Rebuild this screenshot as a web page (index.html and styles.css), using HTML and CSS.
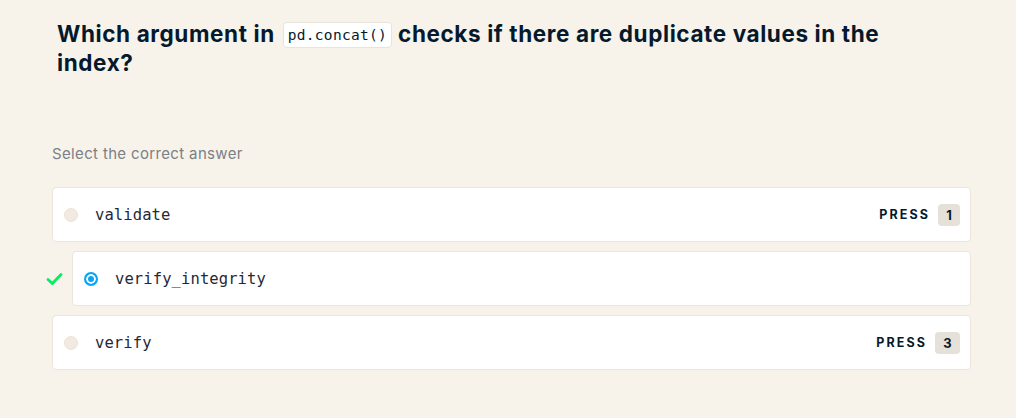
FILE: index.html
```html
<!DOCTYPE html>
<html lang="en">
<head>
<meta charset="utf-8">
<link rel="stylesheet" href="styles.css">
</head>
<body>
<main class="page">
  <h1 class="question">Which argument in<code class="inline-code">pd.concat()</code>checks if there are duplicate values in the index?</h1>
  <p class="hint">Select the correct answer</p>
  <div class="options">
    <div class="row">
      <div class="card">
        <span class="radio"></span>
        <span class="label">validate</span>
        <span class="press">PRESS <span class="key">1</span></span>
      </div>
    </div>
    <div class="row">
      <svg class="check" width="17" height="14" viewBox="0 0 17 14"><path d="M2 7.5 L6.3 11.5 L15 2.5" fill="none" stroke="#03ef62" stroke-width="2.8" stroke-linecap="round" stroke-linejoin="round"/></svg>
      <div class="card selected">
        <span class="radio on"></span>
        <span class="label">verify_integrity</span>
      </div>
    </div>
    <div class="row">
      <div class="card">
        <span class="radio"></span>
        <span class="label">verify</span>
        <span class="press">PRESS <span class="key wide">3</span></span>
      </div>
    </div>
  </div>
</main>
</body>
</html>
```

FILE: styles.css
```css
html, body {
  margin: 0;
  padding: 0;
  background: #f7f3eb;
}
.page {
  padding: 19px 45px 0 52px;
  font-family: Inter, "Noto Sans", sans-serif;
  color: #05192d;
}
.question {
  margin: 0 0 0 5px;
  width: 880px;
  font-size: 22.5px;
  line-height: 29px;
  font-weight: 700;
  letter-spacing: 0.6px;
  color: #05192d;
}
.inline-code {
  display: inline-block;
  margin: 0 6px 0 8px;
  font-family: "DejaVu Sans Mono", monospace;
  font-size: 14.5px;
  font-weight: 400;
  line-height: 24px;
  padding: 0 4px;
  background: #fff;
  border: 1px solid #e8e4dc;
  border-radius: 4px;
  vertical-align: 2px;
  letter-spacing: 0.3px;
}
.hint {
  margin: 67px 0 0 0;
  font-size: 15px;
  line-height: 20px;
  letter-spacing: 0.35px;
  color: #7b7f86;
}
.options {
  margin-top: 23px;
  display: flex;
  flex-direction: column;
  gap: 9px;
}
.row {
  display: flex;
  align-items: center;
}
.check {
  width: 17px;
  height: 14px;
  margin-left: -6px;
  margin-right: 9px;
}
.card {
  flex: 1;
  height: 55px;
  box-sizing: border-box;
  background: #fff;
  border: 1px solid #ebe6dd;
  border-radius: 4px;
  display: flex;
  align-items: center;
  padding: 0 10px 0 10px;
}
.radio {
  width: 14px;
  height: 14px;
  box-sizing: border-box;
  border-radius: 50%;
  background: #f2e9e0;
  border: 1px solid #ece2d7;
  margin-left: 1px;
  margin-right: 17px;
}
.radio.on {
  background: #05a6f5;
  border: 2px solid #05a6f5;
  box-shadow: inset 0 0 0 2px #fff;
}
.label {
  font-family: "DejaVu Sans Mono", monospace;
  font-size: 15.5px;
  color: #1f2a36;
  letter-spacing: 0.1px;
}
.press {
  margin-left: auto;
  display: flex;
  align-items: center;
  gap: 8px;
  font-size: 12.5px;
  font-weight: 700;
  letter-spacing: 2.1px;
  color: #05192d;
}
.key {
  display: inline-flex;
  align-items: center;
  justify-content: center;
  width: 22px;
  height: 22px;
  border-radius: 4px;
  background: #e5e0d8;
  font-size: 13px;
  letter-spacing: 0;
  font-weight: 700;
}
.key.wide {
  width: 25px;
}
```
